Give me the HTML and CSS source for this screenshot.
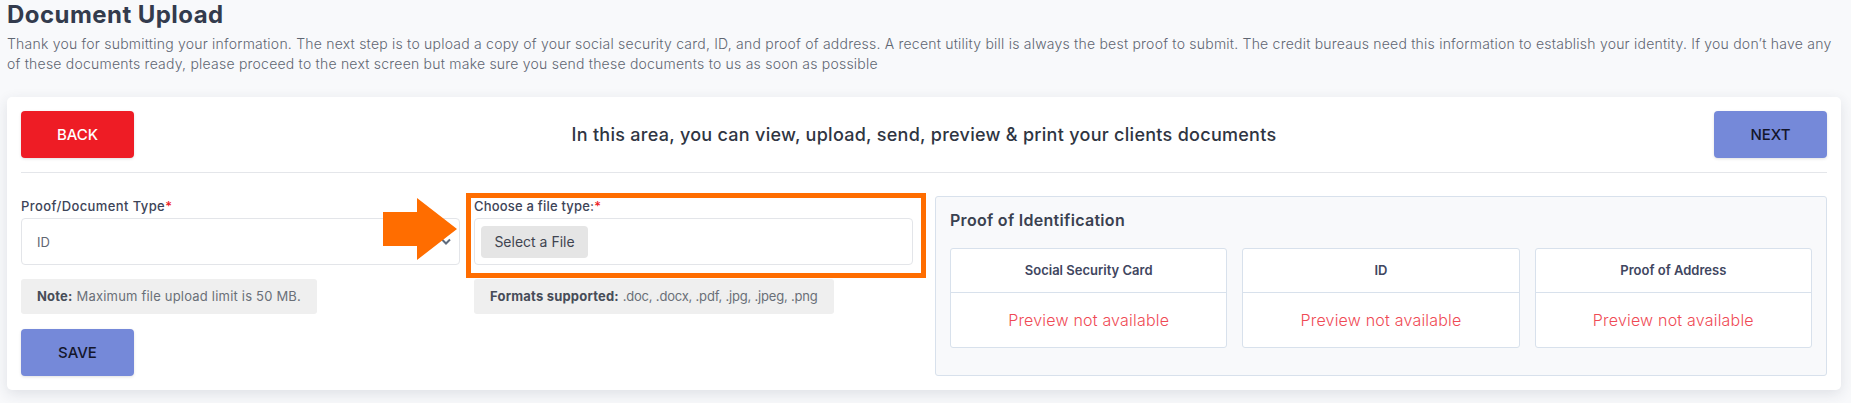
FILE: index.html
```html
<!DOCTYPE html>
<html>
<head>
  <title>Document Upload</title>
  <meta charset="UTF-8">
  <link rel="stylesheet" href="styles.css">
</head>
<body>
  <div class="intro">
    <h1>Document Upload</h1>
    <p>Thank you for submitting your information. The next step is to upload a copy of your social security card, ID, and proof of address. A recent utility bill is always the best proof to submit. The credit bureaus need this information to establish your identity. If you don’t have any<br>of these documents ready, please proceed to the next screen but make sure you send these documents to us as soon as possible</p>
  </div>

  <div class="card">
    <div class="toolbar">
      <button class="button button-red">BACK</button>
      <h2>In this area, you can view, upload, send, preview &amp; print your clients documents</h2>
      <button class="button button-blue">NEXT</button>
    </div>

    <div class="content">
      <div class="column">
        <label class="label-wide">Proof/Document Type<span class="required">*</span></label>
        <div class="field select-field">
          <span>ID</span>
          <svg class="chevron" width="10" height="7" viewBox="0 0 10 7"><path d="M1 1.5l4 4 4-4" fill="none" stroke="#5f6b7c" stroke-width="2"/></svg>
        </div>
        <div class="note"><b>Note:</b> Maximum file upload limit is 50 MB.</div>
        <button class="button button-blue">SAVE</button>
      </div>

      <div class="column file-column">
        <label>Choose a file type:<span class="required">*</span></label>
        <div class="field file-field">
          <button class="file-button">Select a File</button>
        </div>
        <div class="note"><b>Formats supported:</b> <span class="note-list">.doc, .docx, .pdf, .jpg, .jpeg, .png</span></div>
        <div class="highlight"></div>
        <svg class="arrow" width="74" height="62" viewBox="0 0 74 62"><polygon points="0,14 34,14 34,0 74,31 34,62 34,48 0,48" fill="#ff6d00"/></svg>
      </div>

      <div class="panel">
        <h3>Proof of Identification</h3>
        <div class="previews">
          <div class="preview">
            <div class="preview-title">Social Security Card</div>
            <div class="preview-body">Preview not available</div>
          </div>
          <div class="preview">
            <div class="preview-title">ID</div>
            <div class="preview-body">Preview not available</div>
          </div>
          <div class="preview">
            <div class="preview-title">Proof of Address</div>
            <div class="preview-body">Preview not available</div>
          </div>
        </div>
      </div>
    </div>
  </div>
</body>
</html>
```

FILE: styles.css
```css
body {
  font-family: Inter, "Noto Sans", sans-serif;
  margin: 0;
  padding: 0 10px 13px 7px;
  background-color: #f8f9fb;
  color: #333b4d;
}
button {
  font-family: inherit;
  cursor: pointer;
}
.intro {
  height: 97px;
}
h1 {
  margin: 0;
  font-size: 24px;
  letter-spacing: 0.45px;
  line-height: 30px;
  font-weight: 700;
}
.intro p {
  margin: 4px 0 0;
  font-size: 14px;
  letter-spacing: 0.22px;
  line-height: 20px;
  font-weight: 300;
  color: #5f6672;
  white-space: nowrap;
}
.card {
  height: 293px;
  box-sizing: border-box;
  padding: 14px;
  background-color: #fff;
  border-radius: 5px;
  box-shadow: 0 4px 14px rgba(40, 50, 70, 0.12);
}
.toolbar {
  display: flex;
  align-items: center;
  justify-content: space-between;
  padding-bottom: 14px;
  border-bottom: 1px solid #e4e6ea;
}
.toolbar h2 {
  margin: 0;
  font-size: 18px;
  letter-spacing: 0.28px;
  font-weight: 500;
  color: #2f3542;
}
.button {
  width: 113px;
  height: 47px;
  border: 0;
  border-radius: 4px;
  font-size: 15px;
  font-weight: 500;
  box-shadow: 0 1px 3px rgba(0, 0, 0, 0.12);
}
.button-red {
  background-color: #ee1c25;
  color: #fff;
}
.button-blue {
  background-color: #7589d9;
  color: #14162b;
}
.content {
  display: flex;
  margin-top: 23px;
}
.column {
  position: relative;
  width: 439px;
  margin-right: 14px;
  flex-shrink: 0;
}
.file-column {
  margin-right: 22px;
}
label {
  display: block;
  height: 22px;
  padding-top: 1px;
  box-sizing: border-box;
  font-size: 13px;
  letter-spacing: 0.2px;
  line-height: 19px;
  font-weight: 500;
  color: #3d4458;
}
.label-wide {
  letter-spacing: 0.4px;
}
.required {
  color: #ee1c25;
}
.field {
  display: flex;
  align-items: center;
  justify-content: space-between;
  height: 47px;
  box-sizing: border-box;
  background-color: #fff;
  border: 1px solid #e3e5e9;
  border-radius: 4px;
}
.select-field {
  padding: 0 8px 0 15px;
  font-size: 13px;
  color: #5f6672;
}
.file-field {
  padding-left: 6px;
}
.file-button {
  width: 107px;
  height: 32px;
  border: 0;
  border-radius: 4px;
  background-color: #e5e5e5;
  font-size: 14px;
  color: #3f4450;
}
.note {
  display: inline-block;
  height: 35px;
  margin-top: 14px;
  padding: 0 16px;
  box-sizing: border-box;
  background-color: #efefef;
  border-radius: 3px;
  font-size: 13px;
  letter-spacing: 0.2px;
  line-height: 35px;
  color: #6a6f78;
}
.note b {
  font-weight: 700;
  color: #474c58;
}
.note-list {
  letter-spacing: -0.2px;
}
.column .button {
  display: block;
  margin-top: 15px;
}
.highlight {
  position: absolute;
  top: -3px;
  left: -8px;
  width: 460px;
  height: 85px;
  box-sizing: border-box;
  border: 5px solid #ff6d00;
}
.arrow {
  position: absolute;
  top: 2px;
  left: -91px;
}
.panel {
  flex: 1;
  height: 180px;
  box-sizing: border-box;
  padding: 0 14px;
  background-color: #f8f9fb;
  border: 1px solid #d8e1ec;
  border-radius: 3px;
}
.panel h3 {
  margin: 0;
  height: 51px;
  font-size: 16px;
  letter-spacing: 0.3px;
  line-height: 46px;
  font-weight: 600;
  color: #3a4150;
}
.previews {
  display: flex;
  gap: 15px;
}
.preview {
  flex: 1;
  height: 100px;
  box-sizing: border-box;
  background-color: #fff;
  border: 1px solid #d8e1ec;
  border-radius: 3px;
  text-align: center;
}
.preview-title {
  height: 44px;
  box-sizing: border-box;
  border-bottom: 1px solid #d8e1ec;
  font-size: 13px;
  line-height: 42px;
  font-weight: 600;
  color: #3f4660;
}
.preview-body {
  font-size: 16px;
  letter-spacing: 0.2px;
  line-height: 54px;
  font-weight: 300;
  color: #ef4a55;
}
```
